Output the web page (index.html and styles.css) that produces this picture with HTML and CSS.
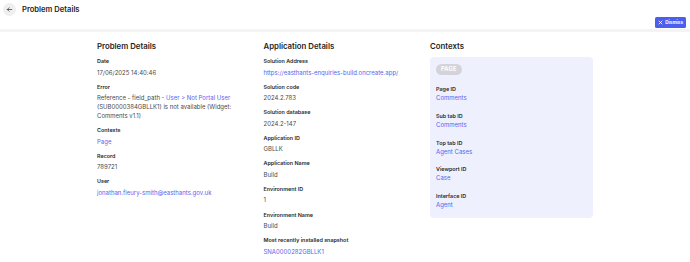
FILE: index.html
```html
<!DOCTYPE html>
<html lang="en">
<head>
    <meta charset="UTF-8">
    <meta name="viewport" content="width=device-width, initial-scale=1.0">
    <title>Problem Details</title>
    <link rel="stylesheet" href="styles.css">
</head>
<body>
    <header class="topbar">
        <div class="topbar-title">
            <button class="back-btn" aria-label="Back">
                <svg width="7" height="7" viewBox="0 0 16 16" fill="none" stroke="#555" stroke-width="2" stroke-linecap="round" stroke-linejoin="round">
                    <path d="M13 8H3M7 4L3 8l4 4"/>
                </svg>
            </button>
            <h1>Problem Details</h1>
        </div>
        <button class="dismiss-btn">
            <svg width="5" height="5" viewBox="0 0 10 10" stroke="#fff" stroke-width="1.6" stroke-linecap="round">
                <path d="M2 2l6 6M8 2l-6 6"/>
            </svg>
            Dismiss
        </button>
    </header>
    <div class="band"></div>

    <main class="details">
        <section class="column">
            <h2>Problem Details</h2>
            <div class="field">
                <div class="label">Date</div>
                <div class="value">17/06/2025 14:40:46</div>
            </div>
            <div class="field">
                <div class="label">Error</div>
                <div class="value">Reference - field_path - <a href="#">User &gt; Not Portal User</a> (SUB0000384GBLLK1) is not available (Widget: Comments v1.1)</div>
            </div>
            <div class="field">
                <div class="label">Contexts</div>
                <div class="value"><a href="#">Page</a></div>
            </div>
            <div class="field">
                <div class="label">Record</div>
                <div class="value">789721</div>
            </div>
            <div class="field">
                <div class="label">User</div>
                <div class="value"><a href="#">jonathan.fleury-smith@easthants.gov.uk</a></div>
            </div>
        </section>

        <section class="column">
            <h2>Application Details</h2>
            <div class="field">
                <div class="label">Solution Address</div>
                <div class="value"><a href="#">https://easthants-enquiries-build.oncreate.app/</a></div>
            </div>
            <div class="field">
                <div class="label">Solution code</div>
                <div class="value">2024.2.783</div>
            </div>
            <div class="field">
                <div class="label">Solution database</div>
                <div class="value">2024.2-147</div>
            </div>
            <div class="field">
                <div class="label">Application ID</div>
                <div class="value">GBLLK</div>
            </div>
            <div class="field">
                <div class="label">Application Name</div>
                <div class="value">Build</div>
            </div>
            <div class="field">
                <div class="label">Environment ID</div>
                <div class="value">1</div>
            </div>
            <div class="field">
                <div class="label">Environment Name</div>
                <div class="value">Build</div>
            </div>
            <div class="field">
                <div class="label">Most recently installed snapshot</div>
                <div class="value"><a href="#">SNA0000282GBLLK1</a></div>
            </div>
        </section>

        <section class="column">
            <h2>Contexts</h2>
            <div class="context-card">
                <span class="pill">PAGE</span>
                <div class="context-item">
                    <div class="label">Page ID</div>
                    <a href="#">Comments</a>
                </div>
                <div class="context-item">
                    <div class="label">Sub tab ID</div>
                    <a href="#">Comments</a>
                </div>
                <div class="context-item">
                    <div class="label">Top tab ID</div>
                    <a href="#">Agent Cases</a>
                </div>
                <div class="context-item">
                    <div class="label">Viewport ID</div>
                    <a href="#">Case</a>
                </div>
                <div class="context-item">
                    <div class="label">Interface ID</div>
                    <a href="#">Agent</a>
                </div>
            </div>
        </section>
    </main>
</body>
</html>
```

FILE: styles.css
```css
body {
    font-family: Inter, "Noto Sans", sans-serif;
    margin: 0;
    background: #fff;
    color: #222;
}

a {
    color: #5665f0;
    text-decoration: none;
}

.topbar {
    display: flex;
    justify-content: space-between;
    align-items: flex-start;
    height: 29px;
    padding: 0 4px 0 3px;
}

.topbar-title {
    display: flex;
    align-items: center;
    gap: 6px;
    padding-top: 3px;
}

.back-btn {
    width: 13px;
    height: 13px;
    border: none;
    border-radius: 50%;
    background: #efefef;
    padding: 0;
    display: flex;
    align-items: center;
    justify-content: center;
}

.topbar h1 {
    margin: 0;
    font-size: 7.6px;
    font-weight: 600;
    color: #1f1f1f;
}

.dismiss-btn {
    margin-top: 17px;
    height: 11px;
    padding: 0 3px;
    border: none;
    border-radius: 1.5px;
    background: #4b5ef0;
    color: #fff;
    font-family: inherit;
    font-size: 4.6px;
    font-weight: 700;
    display: flex;
    align-items: center;
    gap: 2px;
}

.band {
    height: 3px;
    background: #f4f4f5;
}

.details {
    width: 496px;
    margin: 0 auto;
    padding-top: 9px;
    display: grid;
    grid-template-columns: repeat(3, 163px);
    column-gap: 3.5px;
}

.column h2 {
    margin: 0 0 6px;
    font-size: 7.8px;
    line-height: 10px;
    font-weight: 600;
    color: #1f1f1f;
}

.field {
    margin-bottom: 6.1px;
}

.label {
    font-size: 5.4px;
    line-height: 8px;
    font-weight: 600;
    color: #2a2a2a;
}

.field .label {
    margin-bottom: 2.5px;
}

.value {
    font-size: 6px;
    line-height: 9px;
    color: #4a4a4a;
}

.context-card {
    margin-top: 4px;
    background: #eef0fd;
    border-radius: 4px;
    padding: 7px 6px 8.5px;
}

.pill {
    display: block;
    width: fit-content;
    background: #d3d4da;
    color: #fff;
    font-size: 5.6px;
    font-weight: 700;
    letter-spacing: 0.2px;
    line-height: 11px;
    padding: 0 5px;
    border-radius: 6px;
    margin-bottom: 10px;
}

.context-item {
    margin-bottom: 9.8px;
}

.context-item:last-child {
    margin-bottom: 0;
}

.context-item a {
    display: block;
    font-size: 6px;
    line-height: 9px;
}
```
